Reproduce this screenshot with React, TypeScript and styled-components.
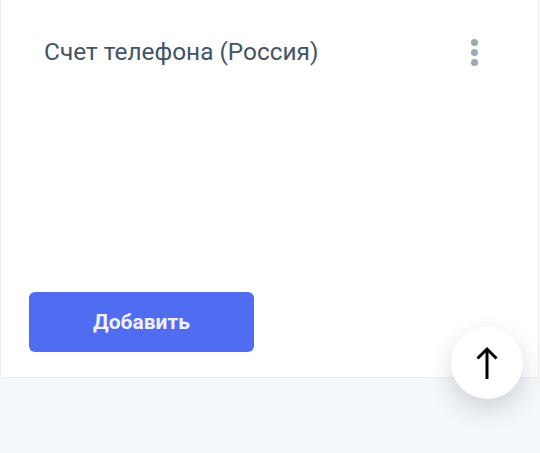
import React from 'react';
import styled, { createGlobalStyle } from 'styled-components';

const GlobalStyle = createGlobalStyle`
  html, body {
    margin: 0;
    padding: 0;
    background: #f5f8fa;
    font-family: Roboto, "Noto Sans", sans-serif;
  }
`;

const Page = styled.div`
  width: 540px;
  height: 453px;
  overflow: hidden;
  position: relative;
`;

const Card = styled.div`
  height: 378px;
  margin: 0 1px 0 0;
  background: #ffffff;
  border: 1px solid #eceff3;
  border-top: none;
  box-sizing: border-box;
  display: flex;
  flex-direction: column;
  justify-content: space-between;
  padding: 35px 58px 25px 28px;
`;

const Header = styled.div`
  display: flex;
  align-items: center;
  justify-content: space-between;
  padding-left: 15px;
`;

const Title = styled.h2`
  margin: 0;
  font-size: 24.4px;
  font-weight: 400;
  color: #425466;
  line-height: 34px;
`;

const MenuButton = styled.button`
  border: none;
  background: none;
  padding: 0;
  width: 12px;
  height: 27px;
  display: flex;
  flex-direction: column;
  align-items: center;
  justify-content: space-between;
  cursor: pointer;
`;

const Dot = styled.span`
  width: 7px;
  height: 7px;
  border-radius: 50%;
  background: #9aa8b8;
`;

const AddButton = styled.button`
  width: 225px;
  height: 60px;
  border: none;
  border-radius: 6px;
  background: #506cf0;
  color: #eef2fd;
  font-family: Roboto, "Noto Sans", sans-serif;
  font-size: 21px;
  font-weight: 700;
  cursor: pointer;
`;

const ScrollTop = styled.button`
  position: absolute;
  left: 451px;
  top: 327px;
  width: 72px;
  height: 72px;
  border-radius: 50%;
  border: none;
  background: #ffffff;
  box-shadow: 0 10px 24px rgba(30, 40, 60, 0.18);
  display: flex;
  align-items: center;
  justify-content: center;
  padding: 0;
  cursor: pointer;
`;

const App = () => {
  return (
    <Page>
      <GlobalStyle />
      <Card>
        <Header>
          <Title>Счет телефона (Россия)</Title>
          <MenuButton aria-label="menu">
            <Dot />
            <Dot />
            <Dot />
          </MenuButton>
        </Header>
        <AddButton>Добавить</AddButton>
      </Card>
      <ScrollTop aria-label="up">
        <svg width="24" height="34" viewBox="0 0 24 34" fill="none" stroke="#000" strokeWidth="3" strokeLinecap="butt" strokeLinejoin="miter">
          <path d="M12 33V3" />
          <path d="M2.5 12.5L12 3l9.5 9.5" />
        </svg>
      </ScrollTop>
    </Page>
  );
};

export default App;
